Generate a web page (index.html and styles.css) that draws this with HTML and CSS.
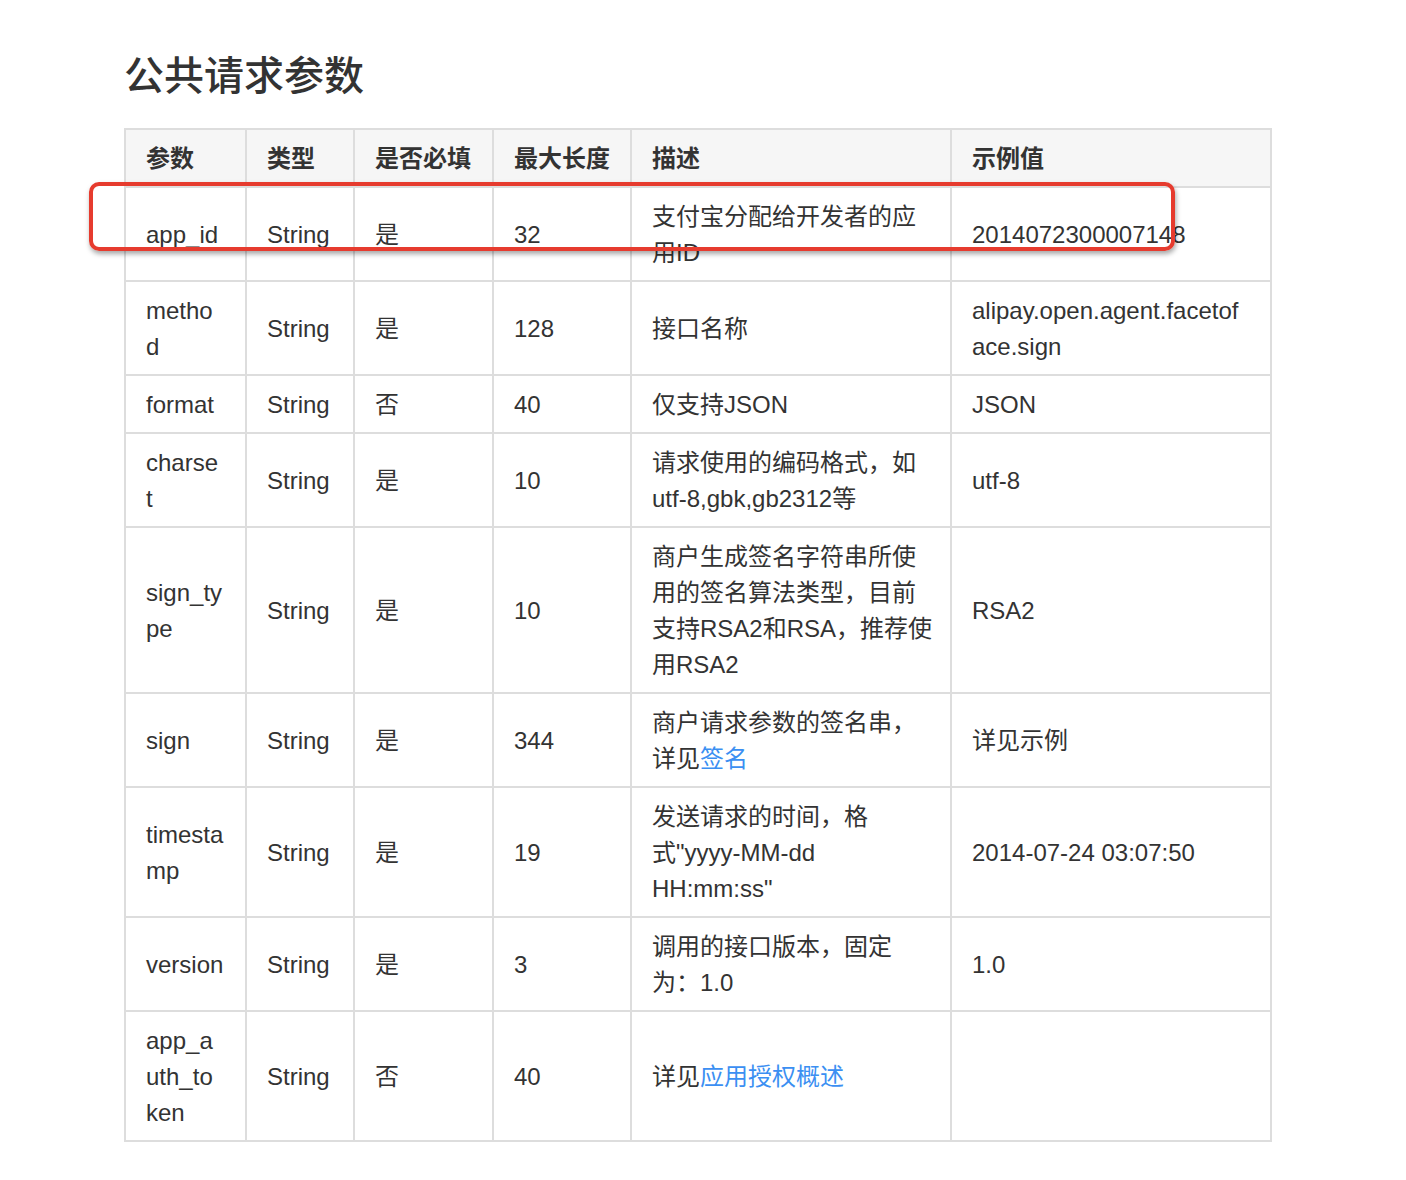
FILE: index.html
```html
<!DOCTYPE html>
<html lang="zh-CN">
<head>
<meta charset="utf-8">
<title>公共请求参数</title>
<link rel="stylesheet" href="styles.css">
</head>
<body>
<div class="page">
  <h2 class="title">公共请求参数</h2>
  <div class="table-wrap">
    <table class="params">
      <colgroup>
        <col class="c-name"><col class="c-type"><col class="c-req"><col class="c-len"><col class="c-desc"><col class="c-ex">
      </colgroup>
      <thead>
        <tr><th>参数</th><th>类型</th><th>是否必填</th><th>最大长度</th><th>描述</th><th>示例值</th></tr>
      </thead>
      <tbody>
        <tr><td>app_id</td><td>String</td><td>是</td><td>32</td><td class="desc">支付宝分配给开发者的应用ID</td><td>2014072300007148</td></tr>
        <tr><td>method</td><td>String</td><td>是</td><td>128</td><td class="desc">接口名称</td><td>alipay.open.agent.facetoface.sign</td></tr>
        <tr><td>format</td><td>String</td><td>否</td><td>40</td><td class="desc">仅支持JSON</td><td>JSON</td></tr>
        <tr><td>charset</td><td>String</td><td>是</td><td>10</td><td class="desc">请求使用的编码格式，如utf-8,gbk,gb2312等</td><td>utf-8</td></tr>
        <tr><td>sign_type</td><td>String</td><td>是</td><td>10</td><td class="desc">商户生成签名字符串所使用的签名算法类型，目前支持RSA2和RSA，推荐使用RSA2</td><td>RSA2</td></tr>
        <tr><td>sign</td><td>String</td><td>是</td><td>344</td><td class="desc">商户请求参数的签名串，详见<a href="#">签名</a></td><td>详见示例</td></tr>
        <tr><td>timestamp</td><td>String</td><td>是</td><td>19</td><td class="desc">发送请求的时间，格式"yyyy-MM-dd HH:mm:ss"</td><td>2014-07-24 03:07:50</td></tr>
        <tr><td>version</td><td>String</td><td>是</td><td>3</td><td class="desc">调用的接口版本，固定为：1.0</td><td>1.0</td></tr>
        <tr><td>app_auth_token</td><td>String</td><td>否</td><td>40</td><td class="desc">详见<a href="#">应用授权概述</a></td><td></td></tr>
      </tbody>
    </table>
    <div class="highlight"></div>
  </div>
</div>
</body>
</html>
```

FILE: styles.css
```css
html, body {
  margin: 0;
  padding: 0;
  background: #ffffff;
}
body {
  font-family: "Liberation Sans", Arial, "Noto Sans CJK SC", sans-serif;
  color: #333333;
}
.page {
  padding: 52px 0 0 124px;
}
.title {
  margin: 0 0 28px 0;
  font-size: 40px;
  line-height: 48px;
  font-weight: 500;
  color: #333333;
}
.table-wrap {
  position: relative;
  width: 1148px;
}
.params {
  border-collapse: collapse;
  table-layout: fixed;
  width: 1148px;
  border: 2px solid #dddddd;
  font-size: 24px;
  line-height: 36px;
}
.c-name { width: 121px; }
.c-type { width: 108px; }
.c-req { width: 139px; }
.c-len { width: 138px; }
.c-desc { width: 320px; }
.c-ex { width: 320px; }
.params th,
.params td {
  border: 2px solid #dddddd;
  padding: 11px 20px 9px 20px;
  text-align: left;
  vertical-align: middle;
  word-break: break-all;
}
.params th {
  background: #f6f6f6;
  font-weight: bold;
}
.params td:first-child {
  padding-right: 21px;
}
.params td.desc {
  word-break: normal;
  overflow-wrap: break-word;
  padding-right: 16px;
}
.params a {
  color: #3b8ff2;
  text-decoration: none;
}
.highlight {
  position: absolute;
  left: -35px;
  top: 54px;
  width: 1078px;
  height: 61px;
  border: 4px solid #e63b2e;
  border-radius: 10px;
  box-shadow: 1px 3px 5px rgba(0, 0, 0, 0.35);
  pointer-events: none;
}
```
